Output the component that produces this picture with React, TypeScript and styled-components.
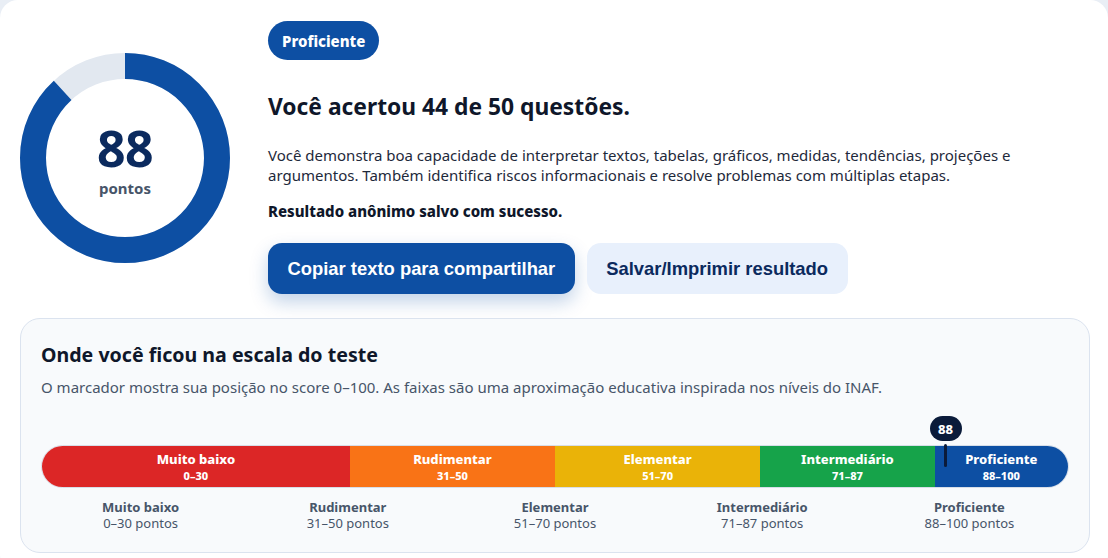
import React from "react";
import styled, { createGlobalStyle } from "styled-components";

const Global = createGlobalStyle`
  html, body { margin: 0; padding: 0; }
  body {
    background: #e9eef5;
    font-family: "Noto Sans", "Open Sans", sans-serif;
    color: #0f172a;
  }
  * { box-sizing: border-box; }
`;

const Card = styled.div`
  width: 1108px;
  min-height: 558px;
  background: #ffffff;
  border-radius: 18px;
  padding: 21px 18px 20px 20px;
  display: flex;
  flex-direction: column;
  gap: 24px;
`;

const Top = styled.section`
  display: flex;
  align-items: center;
  gap: 38px;
`;

const Donut = styled.div`
  position: relative;
  width: 210px;
  height: 210px;
  flex: none;
`;

const DonutCenter = styled.div`
  position: absolute;
  inset: 0;
  display: flex;
  flex-direction: column;
  align-items: center;
  justify-content: center;
  padding-top: 4px;
`;

const Score = styled.div`
  font-size: 50px;
  font-weight: 700;
  line-height: 50px;
  color: #0b2a5e;
  letter-spacing: -0.5px;
`;

const ScoreUnit = styled.div`
  margin-top: 6px;
  font-size: 15px;
  font-weight: 700;
  color: #475569;
  line-height: 18px;
`;

const Info = styled.div`
  display: flex;
  flex-direction: column;
  align-items: flex-start;
  flex: 1;
`;

const Pill = styled.span`
  display: inline-flex;
  align-items: center;
  height: 39px;
  padding: 0 14px;
  border-radius: 20px;
  background: #0d4fa3;
  color: #fff;
  font-size: 15px;
  font-weight: 800;
`;

const Heading = styled.h2`
  margin: 33px 0 0;
  font-size: 22.8px;
  line-height: 28px;
  font-weight: 700;
  color: #0f172a;
`;

const Para = styled.p`
  margin: 24px 0 0;
  font-size: 15px;
  line-height: 20px;
  color: #1e293b;
  max-width: 800px;
`;

const Strong = styled.p`
  margin: 16px 0 0;
  font-size: 15px;
  line-height: 20px;
  font-weight: 800;
  color: #0f172a;
`;

const Buttons = styled.div`
  display: flex;
  gap: 12px;
  margin-top: 22px;
`;

const Button = styled.button<{ $primary?: boolean }>`
  height: 51px;
  padding: 0 19.5px;
  border: none;
  border-radius: 14px;
  font-family: "Liberation Sans", Arial, sans-serif;
  font-size: 18.4px;
  font-weight: 700;
  cursor: pointer;
  background: ${(p) => (p.$primary ? "#0d4fa3" : "#e8f0fc")};
  color: ${(p) => (p.$primary ? "#ffffff" : "#0b2a5e")};
  box-shadow: ${(p) => (p.$primary ? "0 8px 18px rgba(13,79,163,0.25)" : "none")};
`;

const Panel = styled.section`
  background: #f8fafc;
  border: 1px solid #dbe3ef;
  border-radius: 20px;
  padding: 22px 20px 20px 20px;
`;

const PanelTitle = styled.h3`
  margin: 0;
  font-size: 19.6px;
  line-height: 28px;
  font-weight: 700;
  color: #0f172a;
`;

const PanelSub = styled.p`
  margin: 8px 0 0;
  font-size: 15px;
  line-height: 20px;
  color: #475569;
`;

const ScaleWrap = styled.div`
  position: relative;
  margin-top: 48px;
`;

const Bar = styled.div`
  display: flex;
  height: 43px;
  border-radius: 22px;
  overflow: hidden;
  border: 1px solid #d7dee8;
`;

const Segment = styled.div<{ $color: string; $grow: number }>`
  flex: ${(p) => p.$grow} 0 0;
  background: ${(p) => p.$color};
  color: #fff;
  display: flex;
  flex-direction: column;
  align-items: center;
  justify-content: center;
`;

const SegName = styled.div`
  font-size: 13px;
  font-weight: 800;
  line-height: 18px;
`;

const SegRange = styled.div`
  font-size: 11px;
  font-weight: 800;
  line-height: 16px;
`;

const Marker = styled.div`
  position: absolute;
  top: -29px;
  transform: translateX(-50%);
  display: flex;
  flex-direction: column;
  align-items: center;
`;

const MarkerBadge = styled.div`
  height: 25px;
  min-width: 32px;
  padding: 0 6px;
  border-radius: 13px;
  background: #0b1b3a;
  color: #fff;
  font-size: 13px;
  font-weight: 800;
  display: flex;
  align-items: center;
  justify-content: center;
`;

const MarkerLine = styled.div`
  width: 3px;
  height: 23px;
  margin-top: 3px;
  border-radius: 2px;
  background: #0b1b3a;
`;

const Legend = styled.div`
  display: grid;
  grid-template-columns: repeat(5, 1fr);
  gap: 8px;
  margin-top: 11px;
`;

const LegendItem = styled.div`
  text-align: center;
  color: #475569;
`;

const LegendName = styled.div`
  font-size: 13px;
  font-weight: 700;
  line-height: 16px;
`;

const LegendRange = styled.div`
  font-size: 13px;
  line-height: 17px;
`;

const bands = [
  { name: "Muito baixo", range: "0–30", color: "#dc2626", grow: 30 },
  { name: "Rudimentar", range: "31–50", color: "#f97316", grow: 20 },
  { name: "Elementar", range: "51–70", color: "#eab308", grow: 20 },
  { name: "Intermediário", range: "71–87", color: "#16a34a", grow: 17 },
  { name: "Proficiente", range: "88–100", color: "#0d4fa3", grow: 13 },
];

const score = 88;

function Ring() {
  const r = 92;
  const c = 2 * Math.PI * r;
  return (
    <svg width="210" height="210" viewBox="0 0 210 210">
      <circle cx="105" cy="105" r={r} fill="none" stroke="#e2e8f0" strokeWidth="26" />
      <circle
        cx="105"
        cy="105"
        r={r}
        fill="none"
        stroke="#0d4fa3"
        strokeWidth="26"
        strokeDasharray={`${(c * score) / 100} ${c}`}
        transform="rotate(-90 105 105)"
      />
    </svg>
  );
}

export default function App() {
  return (
    <>
      <Global />
      <Card>
        <Top>
          <Donut>
            <Ring />
            <DonutCenter>
              <Score>88</Score>
              <ScoreUnit>pontos</ScoreUnit>
            </DonutCenter>
          </Donut>
          <Info>
            <Pill>Proficiente</Pill>
            <Heading>Você acertou 44 de 50 questões.</Heading>
            <Para>
              Você demonstra boa capacidade de interpretar textos, tabelas, gráficos, medidas, tendências, projeções e
              argumentos. Também identifica riscos informacionais e resolve problemas com múltiplas etapas.
            </Para>
            <Strong>Resultado anônimo salvo com sucesso.</Strong>
            <Buttons>
              <Button $primary>Copiar texto para compartilhar</Button>
              <Button>Salvar/Imprimir resultado</Button>
            </Buttons>
          </Info>
        </Top>
        <Panel>
          <PanelTitle>Onde você ficou na escala do teste</PanelTitle>
          <PanelSub>
            O marcador mostra sua posição no score 0–100. As faixas são uma aproximação educativa inspirada nos níveis do INAF.
          </PanelSub>
          <ScaleWrap>
            <Bar>
              {bands.map((b) => (
                <Segment key={b.name} $color={b.color} $grow={b.grow}>
                  <SegName>{b.name}</SegName>
                  <SegRange>{b.range}</SegRange>
                </Segment>
              ))}
            </Bar>
            <Marker style={{ left: `${score}%` }}>
              <MarkerBadge>{score}</MarkerBadge>
              <MarkerLine />
            </Marker>
            <Legend>
              {bands.map((b) => (
                <LegendItem key={b.name}>
                  <LegendName>{b.name}</LegendName>
                  <LegendRange>{b.range} pontos</LegendRange>
                </LegendItem>
              ))}
            </Legend>
          </ScaleWrap>
        </Panel>
      </Card>
    </>
  );
}
